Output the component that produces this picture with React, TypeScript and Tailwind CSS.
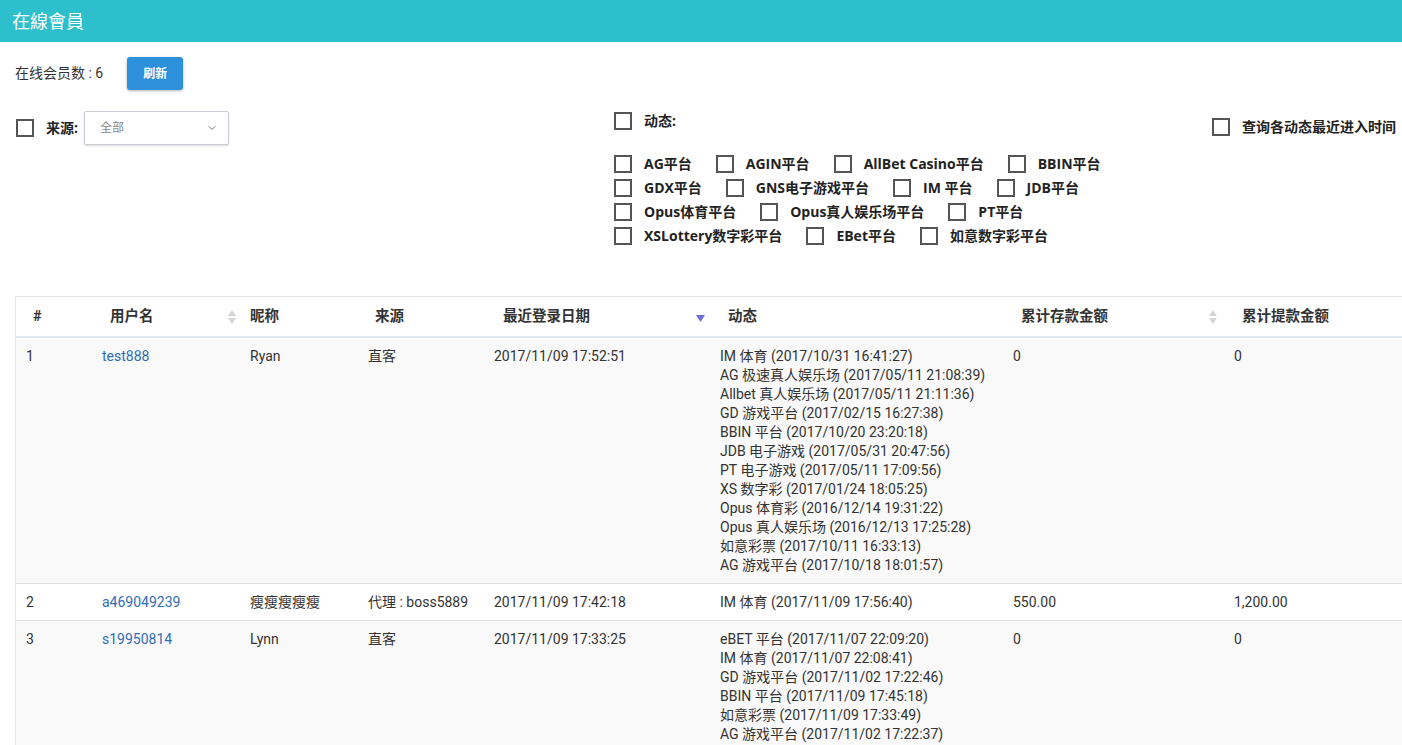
import { ChevronDown } from "lucide-react";

const FONT = { fontFamily: 'Roboto, "Noto Sans CJK SC", sans-serif' };
const LABEL_FONT = { fontFamily: '"Open Sans", "Noto Sans CJK SC", sans-serif' };

type Member = {
  id: number;
  username: string;
  nickname: string;
  source: string;
  lastLogin: string;
  activity: string[];
  deposit: string;
  withdraw: string;
};

const members: Member[] = [
  {
    id: 1,
    username: "test888",
    nickname: "Ryan",
    source: "直客",
    lastLogin: "2017/11/09 17:52:51",
    activity: [
      "IM 体育 (2017/10/31 16:41:27)",
      "AG 极速真人娱乐场 (2017/05/11 21:08:39)",
      "Allbet 真人娱乐场 (2017/05/11 21:11:36)",
      "GD 游戏平台 (2017/02/15 16:27:38)",
      "BBIN 平台 (2017/10/20 23:20:18)",
      "JDB 电子游戏 (2017/05/31 20:47:56)",
      "PT 电子游戏 (2017/05/11 17:09:56)",
      "XS 数字彩 (2017/01/24 18:05:25)",
      "Opus 体育彩 (2016/12/14 19:31:22)",
      "Opus 真人娱乐场 (2016/12/13 17:25:28)",
      "如意彩票 (2017/10/11 16:33:13)",
      "AG 游戏平台 (2017/10/18 18:01:57)",
    ],
    deposit: "0",
    withdraw: "0",
  },
  {
    id: 2,
    username: "a469049239",
    nickname: "瘦瘦瘦瘦瘦",
    source: "代理 : boss5889",
    lastLogin: "2017/11/09 17:42:18",
    activity: ["IM 体育 (2017/11/09 17:56:40)"],
    deposit: "550.00",
    withdraw: "1,200.00",
  },
  {
    id: 3,
    username: "s19950814",
    nickname: "Lynn",
    source: "直客",
    lastLogin: "2017/11/09 17:33:25",
    activity: [
      "eBET 平台 (2017/11/07 22:09:20)",
      "IM 体育 (2017/11/07 22:08:41)",
      "GD 游戏平台 (2017/11/02 17:22:46)",
      "BBIN 平台 (2017/11/09 17:45:18)",
      "如意彩票 (2017/11/09 17:33:49)",
      "AG 游戏平台 (2017/11/02 17:22:37)",
    ],
    deposit: "0",
    withdraw: "0",
  },
];

const platformRows = [
  ["AG平台", "AGIN平台", "AllBet Casino平台", "BBIN平台"],
  ["GDX平台", "GNS电子游戏平台", "IM 平台", "JDB平台"],
  ["Opus体育平台", "Opus真人娱乐场平台", "PT平台"],
  ["XSLottery数字彩平台", "EBet平台", "如意数字彩平台"],
];

const COLS = "grid-cols-[76px_148px_118px_126px_226px_293px_221px_1fr]";

function Box() {
  return <span className="inline-block h-[18px] w-[18px] shrink-0 border-2 border-[#555]" />;
}

function Check({ label }: { label: string }) {
  return (
    <label
      className="flex h-[20px] items-center gap-[12px] text-[14px] font-bold leading-[20px] text-[#222]"
      style={LABEL_FONT}
    >
      <Box />
      <span>{label}</span>
    </label>
  );
}

function SortBoth() {
  return (
    <svg width="8" height="14" viewBox="0 0 8 14" className="text-[#d4d4d4]">
      <path d="M4 0 L8 6 H0 Z" fill="currentColor" />
      <path d="M4 14 L8 8 H0 Z" fill="currentColor" />
    </svg>
  );
}

function SortDesc() {
  return (
    <svg width="9" height="7" viewBox="0 0 9 7">
      <path d="M0 0 H9 L4.5 7 Z" fill="#6b70d6" />
    </svg>
  );
}

export default function App() {
  return (
    <div className="min-h-screen bg-white text-[#333]" style={FONT}>
      <div className="flex h-[42px] items-center bg-[#2ebfcd] px-[12px] text-[18px] text-white">在線會員</div>

      <div className="flex items-center px-[15px] pt-[15px]">
        <span className="text-[14px]">在线会员数 : 6</span>
        <button className="ml-[24px] h-[33px] w-[56px] rounded-[3px] bg-[#2e8fdb] text-[12px] font-bold text-white shadow-[0_1px_3px_rgba(0,0,0,0.3)]">
          刷新
        </button>
      </div>

      <div className="flex pt-[21px] pr-[6px]">
        <div className="flex w-[614px] items-start pl-[16px]">
          <div className="flex items-center pt-[6px]">
            <Box />
            <span className="ml-[12px] text-[14px] font-bold text-[#222]" style={LABEL_FONT}>
              来源:
            </span>
          </div>
          <div className="ml-[6px] flex h-[34px] w-[145px] items-center justify-between rounded-[2px] border border-[#c9ccd6] pl-[15px] pr-[10px] text-[12px] text-[#888] shadow-[0_1px_2px_rgba(0,0,0,0.15)]">
            <span>全部</span>
            <ChevronDown size={12} strokeWidth={2} className="text-[#777]" />
          </div>
        </div>

        <div className="flex-1">
          <Check label="动态:" />
          <div className="mt-[23px] flex flex-col gap-[4px]">
            {platformRows.map((row, i) => (
              <div key={i} className="flex gap-[24px]">
                {row.map((p) => (
                  <Check key={p} label={p} />
                ))}
              </div>
            ))}
          </div>
        </div>

        <div className="pt-[6px] pl-[4px]">
          <Check label="查询各动态最近进入时间" />
        </div>
      </div>

      <div className="ml-[15px] mt-[50px] border-l border-t border-[#e6e6e6]">
        <div
          className={`grid ${COLS} h-[41px] items-center border-b-2 border-[#e3e7ee] text-[14.5px] font-bold text-[#333]`}
        >
          <div className="pl-[17px]">#</div>
          <div className="flex items-center justify-between pl-[18px] pr-[4px]">
            <span>用户名</span>
            <SortBoth />
          </div>
          <div className="pl-[10px]">昵称</div>
          <div className="pl-[17px]">来源</div>
          <div className="flex items-center justify-between pl-[19px] pr-[5px]">
            <span>最近登录日期</span>
            <span className="pt-[4px]">
              <SortDesc />
            </span>
          </div>
          <div className="pl-[18px]">动态</div>
          <div className="flex items-center justify-between pl-[18px] pr-[7px]">
            <span>累计存款金额</span>
            <SortBoth />
          </div>
          <div className="pl-[18px]">累计提款金额</div>
        </div>

        {members.map((m, i) => (
          <div
            key={m.id}
            className={`grid ${COLS} border-b border-[#dddddd] pt-[9px] pb-[8px] text-[14px] leading-[19px] ${
              i % 2 === 0 ? "bg-[#f9f9f9]" : "bg-white"
            }`}
          >
            <div className="pl-[10px]">{m.id}</div>
            <div className="pl-[10px] text-[#2f6db5]">{m.username}</div>
            <div className="pl-[10px]">{m.nickname}</div>
            <div className="pl-[10px]">{m.source}</div>
            <div className="pl-[10px]">{m.lastLogin}</div>
            <div className="pl-[10px]">
              {m.activity.map((a) => (
                <div key={a}>{a}</div>
              ))}
            </div>
            <div className="pl-[10px]">{m.deposit}</div>
            <div className="pl-[10px]">{m.withdraw}</div>
          </div>
        ))}
      </div>
    </div>
  );
}
